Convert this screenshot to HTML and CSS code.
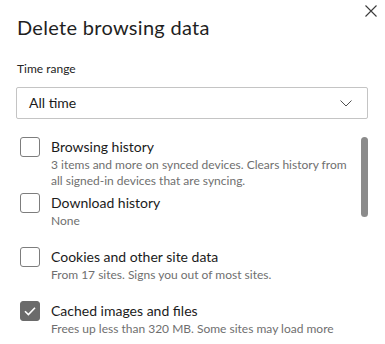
FILE: index.html
```html
<!DOCTYPE html>
<html lang="en">
<head>
  <meta charset="UTF-8">
  <meta name="viewport" content="width=device-width, initial-scale=1.0">
  <title>Delete browsing data</title>
  <link rel="stylesheet" href="styles.css">
</head>
<body>
<div class="dialog">
  <button class="close" aria-label="Close">
    <svg width="12" height="12" viewBox="0 0 12 12"><path d="M0.5 0.5 L11.5 11.5 M11.5 0.5 L0.5 11.5" stroke="#3b3b3b" stroke-width="1.1" fill="none"/></svg>
  </button>
  <h1 class="title">Delete browsing data</h1>

  <div class="field-label">Time range</div>
  <div class="select">
    <span>All time</span>
    <svg width="12" height="7" viewBox="0 0 12 7"><path d="M0.5 0.5 L6 6 L11.5 0.5" stroke="#505050" stroke-width="1" fill="none"/></svg>
  </div>

  <div class="options">
    <div class="scrollbar"></div>

    <div class="option tight">
      <span class="checkbox"></span>
      <div class="option-text">
        <div class="option-label">Browsing history</div>
        <div class="option-desc">3 items and more on synced devices. Clears history from all signed-in devices that are syncing.</div>
      </div>
    </div>

    <div class="option">
      <span class="checkbox"></span>
      <div class="option-text">
        <div class="option-label">Download history</div>
        <div class="option-desc">None</div>
      </div>
    </div>

    <div class="option">
      <span class="checkbox"></span>
      <div class="option-text">
        <div class="option-label">Cookies and other site data</div>
        <div class="option-desc">From 17 sites. Signs you out of most sites.</div>
      </div>
    </div>

    <div class="option">
      <span class="checkbox checked">
        <svg width="20" height="20" viewBox="0 0 20 20"><path d="M5 10.2 L8.4 13.6 L15 6.8" stroke="#fff" stroke-width="1.6" fill="none"/></svg>
      </span>
      <div class="option-text">
        <div class="option-label">Cached images and files</div>
        <div class="option-desc">Frees up less than 320 MB. Some sites may load more</div>
      </div>
    </div>
  </div>
</div>
</body>
</html>
```

FILE: styles.css
```css
body {
    margin: 0;
    background: #fff;
    font-family: "Lato", "Open Sans", sans-serif;
    color: #1b1b1b;
    overflow: hidden;
}

.dialog {
    position: relative;
    padding: 13px 17px 0 16px;
    height: 344px;
    box-sizing: border-box;
}

.close {
    position: absolute;
    top: 5px;
    right: 8px;
    width: 12px;
    height: 12px;
    padding: 0;
    border: none;
    background: none;
    display: flex;
}

.title {
    margin: 0 0 0 1px;
    font-size: 20px;
    line-height: 28px;
    font-weight: 400;
    letter-spacing: 0.3px;
    color: #1f1f1f;
}

.field-label {
    margin: 20px 0 0 1px;
    font-size: 12px;
    line-height: 16px;
    color: #242424;
}

.select {
    margin-top: 10px;
    height: 32px;
    box-sizing: border-box;
    border: 1px solid #c4c4c4;
    border-radius: 2px;
    padding: 0 15px 0 12px;
    display: flex;
    align-items: center;
    justify-content: space-between;
    font-size: 14px;
    line-height: 20px;
}

.options {
    position: relative;
    margin-top: 18px;
    padding-left: 4px;
}

.scrollbar {
    position: absolute;
    top: 0;
    right: 0;
    width: 7px;
    height: 80px;
    border-radius: 4px;
    background: #8b8b8b;
}

.option {
    display: flex;
    gap: 11px;
    margin-bottom: 18px;
}

.option.tight {
    margin-bottom: 4px;
}

.checkbox {
    width: 20px;
    height: 20px;
    flex: none;
    box-sizing: border-box;
    border: 1px solid #7d7d7d;
    border-radius: 3px;
    display: flex;
}

.checkbox.checked {
    background: #6b6b6b;
    border-color: #6b6b6b;
}

.checkbox svg {
    margin: -1px;
}

.option-text {
    width: 300px;
}

.option-label {
    font-size: 14px;
    line-height: 20px;
}

.option-desc {
    font-size: 12px;
    line-height: 16px;
    color: #6f6f6f;
}
```
